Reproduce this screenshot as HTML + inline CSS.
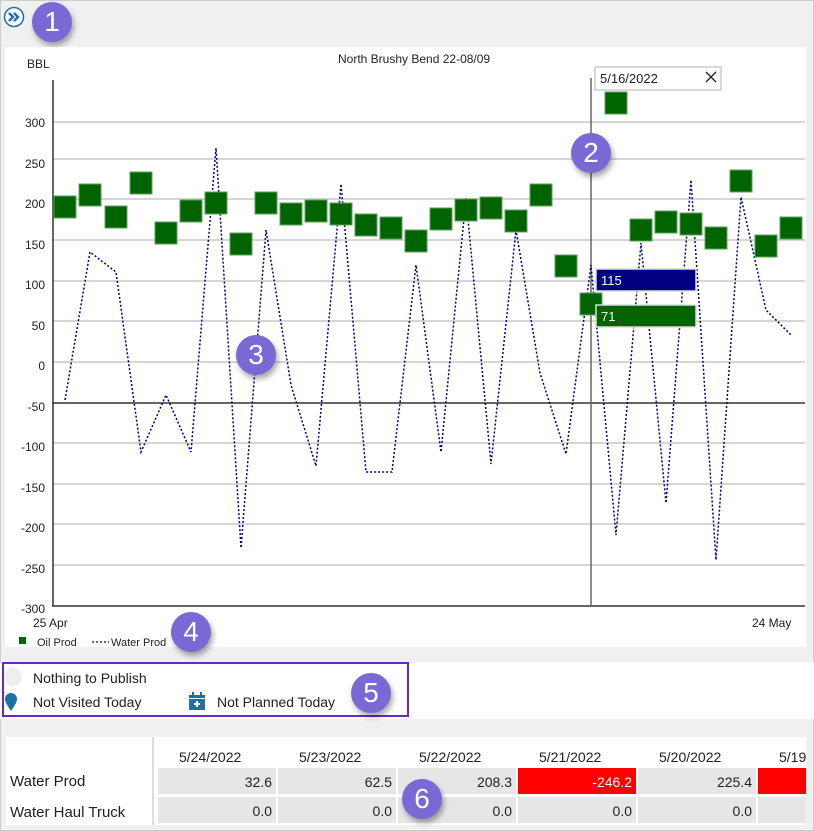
<!DOCTYPE html>
<html><head><style>
body{margin:0;width:814px;height:831px;background:#f0f0f0;font-family:"Liberation Sans",sans-serif;position:relative;overflow:hidden}
.abs{position:absolute}
.badge{position:absolute;width:40px;height:40px;border-radius:50%;background:#7a68d4;color:#fff;font-size:28px;text-align:center;line-height:40px;box-shadow:2px 4px 6px rgba(0,0,0,.35)}
.t{position:absolute;font-size:14px;color:#222}
.cell{position:absolute;background:#e6e6e6;height:26px;text-align:right;font-size:14px;line-height:28px;box-sizing:border-box;padding-right:4px;color:#222}
</style></head><body>
<div class="abs" style="left:0;top:0;width:812px;height:829px;border:1px solid #ccc"></div>
<svg class="abs" style="left:3px;top:6px" width="22" height="22"><circle cx="11" cy="11" r="9.5" fill="#fff" stroke="#1f6fb0" stroke-width="1.5"/><path d="M6 7l4 4-4 4M11 7l4 4-4 4" stroke="#1f6fb0" stroke-width="2.5" fill="none"/></svg>
<div class="badge" style="left:32px;top:2px">1</div>
<div class="abs" style="left:5px;top:47px;width:801px;height:600px;background:#fff"></div>
<svg class="abs" style="left:0;top:0" width="814" height="660">
<g stroke="#c8c8c8" stroke-width="1.5">
<line x1="52" x2="805" y1="122" y2="122"/><line x1="52" x2="805" y1="159" y2="159"/><line x1="52" x2="805" y1="199" y2="199"/><line x1="52" x2="805" y1="240" y2="240"/><line x1="52" x2="805" y1="281" y2="281"/><line x1="52" x2="805" y1="321" y2="321"/><line x1="52" x2="805" y1="362" y2="362"/><line x1="52" x2="805" y1="443" y2="443"/><line x1="52" x2="805" y1="484" y2="484"/><line x1="52" x2="805" y1="524" y2="524"/><line x1="52" x2="805" y1="565" y2="565"/></g>
<line x1="52" x2="805" y1="403" y2="403" stroke="#333" stroke-width="1.5"/>
<line x1="52" x2="805" y1="606" y2="606" stroke="#333" stroke-width="1.5"/>
<line x1="53" x2="53" y1="80" y2="606" stroke="#333" stroke-width="1.5"/>
<line x1="591" x2="591" y1="78" y2="606" stroke="#666" stroke-width="1.5"/>
<polyline fill="none" stroke="#000080" stroke-width="1.5" stroke-dasharray="2,2" points="65,400 90,252 116,272 141,452 166,395 191,452 216,148 241,548 266,230 291,385 316,466 341,184 366,472 392,472 416,265 441,452 466,198 491,464 516,230 540,373 566,454 591,265 616,535 641,243 666,503 691,180 716,560 741,197 766,310 791,335"/>
<g fill="#006400" stroke="#5fa05f" stroke-width="1">
<rect x="54" y="196" width="22" height="22"/><rect x="79" y="184" width="22" height="22"/><rect x="105" y="206" width="22" height="22"/><rect x="130" y="172" width="22" height="22"/><rect x="155" y="222" width="22" height="22"/><rect x="180" y="200" width="22" height="22"/><rect x="205" y="192" width="22" height="22"/><rect x="230" y="233" width="22" height="22"/><rect x="255" y="192" width="22" height="22"/><rect x="280" y="203" width="22" height="22"/><rect x="305" y="200" width="22" height="22"/><rect x="330" y="203" width="22" height="22"/><rect x="355" y="214" width="22" height="22"/><rect x="380" y="217" width="22" height="22"/><rect x="405" y="230" width="22" height="22"/><rect x="430" y="208" width="22" height="22"/><rect x="455" y="199" width="22" height="22"/><rect x="480" y="197" width="22" height="22"/><rect x="505" y="210" width="22" height="22"/><rect x="530" y="184" width="22" height="22"/><rect x="555" y="255" width="22" height="22"/><rect x="580" y="293" width="22" height="22"/><rect x="605" y="92" width="22" height="22"/><rect x="630" y="219" width="22" height="22"/><rect x="655" y="211" width="22" height="22"/><rect x="680" y="213" width="22" height="22"/><rect x="705" y="227" width="22" height="22"/><rect x="730" y="170" width="22" height="22"/><rect x="755" y="235" width="22" height="22"/><rect x="780" y="217" width="22" height="22"/></g>
<rect x="596" y="269" width="100" height="22" fill="#000080" stroke="#ddd" stroke-width="1.5"/>
<rect x="596" y="305" width="100" height="22" fill="#006400" stroke="#ddd" stroke-width="1.5"/>
<text x="601" y="285" fill="#fff" font-size="13" font-family="Liberation Sans">115</text>
<text x="601" y="321" fill="#fff" font-size="13" font-family="Liberation Sans">71</text>
<rect x="595" y="67" width="126" height="23" fill="#fff" stroke="#ccc" stroke-width="1.5"/>
<text x="600" y="83" fill="#222" font-size="13" font-family="Liberation Sans">5/16/2022</text>
<path d="M706 72l10 10M716 72l-10 10" stroke="#222" stroke-width="1.3"/>
<g font-family="Liberation Sans" font-size="12" fill="#222" text-anchor="end">
<text x="45" y="127">300</text><text x="45" y="168">250</text><text x="45" y="208">200</text><text x="45" y="249">150</text><text x="45" y="289">100</text><text x="45" y="330">50</text><text x="45" y="370">0</text><text x="45" y="411">-50</text><text x="45" y="451">-100</text><text x="45" y="492">-150</text><text x="45" y="532">-200</text><text x="45" y="573">-250</text><text x="45" y="613">-300</text></g>
<g font-family="Liberation Sans" font-size="12" fill="#222">
<text x="27" y="68">BBL</text><text x="338" y="63">North Brushy Bend 22-08/09</text>
<text x="33" y="627">25 Apr</text><text x="752" y="627">24 May</text>
<text x="37" y="646" font-size="11">Oil Prod</text><text x="111" y="646" font-size="11">Water Prod</text></g>
<rect x="19" y="637" width="7" height="7" fill="#006400"/>
<line x1="92" x2="109" y1="642" y2="642" stroke="#000080" stroke-dasharray="2,2" stroke-width="1.3"/>
</svg>
<div class="badge" style="left:571px;top:133px">2</div>
<div class="badge" style="left:236px;top:335px">3</div>
<div class="badge" style="left:171px;top:612px">4</div>
<div class="abs" style="left:0;top:662px;width:814px;height:57px;background:#fff"></div>
<div class="abs" style="left:2px;top:662px;width:403px;height:51px;border:2px solid #6a2ac0"></div>
<div class="abs" style="left:4px;top:668px;width:18px;height:18px;border-radius:50%;background:#eee"></div>
<div class="t" style="left:33px;top:670px">Nothing to Publish</div>
<svg class="abs" style="left:4px;top:692px" width="14" height="20"><path d="M7 19C3 13 1 10 1 7a6 6 0 0 1 12 0c0 3-2 6-6 12z" fill="#1f6fa8"/></svg>
<div class="t" style="left:33px;top:694px">Not Visited Today</div>
<svg class="abs" style="left:188px;top:692px" width="18" height="19"><rect x="1" y="3" width="16" height="15" fill="#1f6fa8"/><rect x="4" y="0" width="2" height="4" fill="#1f6fa8"/><rect x="12" y="0" width="2" height="4" fill="#1f6fa8"/><rect x="1" y="6" width="16" height="1" fill="#fff"/><path d="M9 9v6M6 12h6" stroke="#fff" stroke-width="2"/></svg>
<div class="t" style="left:217px;top:694px">Not Planned Today</div>
<div class="badge" style="left:351px;top:673px">5</div>
<div class="abs" style="left:6px;top:737px;width:800px;height:88px;background:#fff"></div>
<div class="abs" style="left:152px;top:737px;width:2px;height:88px;background:#ddd"></div>
<div class="t" style="left:179px;top:749px">5/24/2022</div>
<div class="t" style="left:299px;top:749px">5/23/2022</div>
<div class="t" style="left:419px;top:749px">5/22/2022</div>
<div class="t" style="left:539px;top:749px">5/21/2022</div>
<div class="t" style="left:659px;top:749px">5/20/2022</div>
<div class="t" style="left:779px;top:749px">5/19</div>
<div class="t" style="left:10px;top:773px;font-size:15px">Water Prod</div>
<div class="t" style="left:10px;top:804px;font-size:15px">Water Haul Truck</div>
<div class="cell" style="left:158px;top:768px;width:118px">32.6</div>
<div class="cell" style="left:278px;top:768px;width:118px">62.5</div>
<div class="cell" style="left:398px;top:768px;width:118px">208.3</div>
<div class="cell" style="left:518px;top:768px;width:118px;background:#f00;color:#fff">-246.2</div>
<div class="cell" style="left:638px;top:768px;width:118px">225.4</div>
<div class="cell" style="left:758px;top:768px;width:48px;background:#f00"></div>
<div class="cell" style="left:158px;top:797px;width:118px">0.0</div>
<div class="cell" style="left:278px;top:797px;width:118px">0.0</div>
<div class="cell" style="left:398px;top:797px;width:118px">0.0</div>
<div class="cell" style="left:518px;top:797px;width:118px">0.0</div>
<div class="cell" style="left:638px;top:797px;width:118px">0.0</div>
<div class="cell" style="left:758px;top:797px;width:48px"></div>
<div class="badge" style="left:402px;top:779px">6</div>
</body></html>
